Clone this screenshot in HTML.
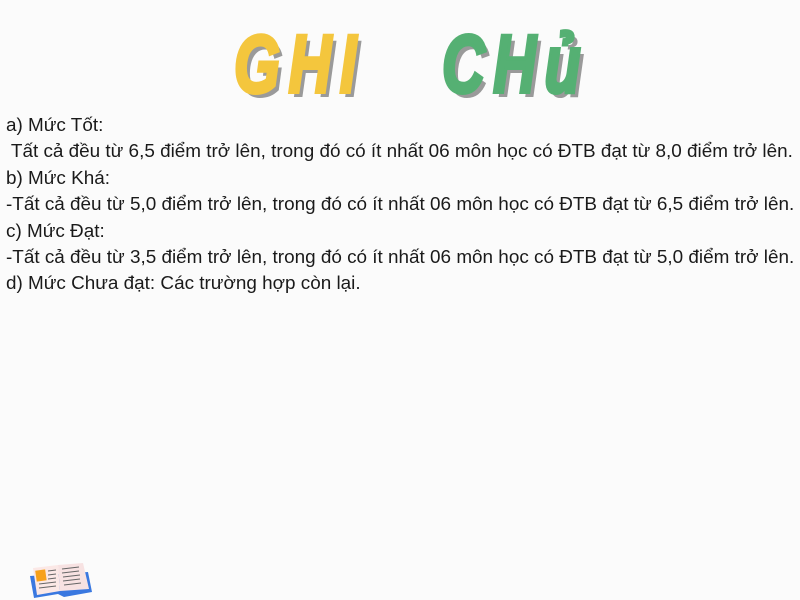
<!DOCTYPE html>
<html><head><meta charset="utf-8"><style>
body{margin:0;width:800px;height:600px;background:#fbfbfb;overflow:hidden;position:relative;font-family:"Liberation Sans","DejaVu Sans",sans-serif}
.t{position:absolute;top:18px;font-family:"Liberation Sans",sans-serif;font-weight:bold;font-style:italic;font-size:82px;letter-spacing:12px;text-shadow:6px 5px 0 #9a9a9a;transform:scaleX(0.72);transform-origin:0 0;white-space:nowrap;-webkit-text-stroke:4px currentColor}
.txt{position:absolute;left:6px;top:113px;font-size:18.9px;line-height:26.4px;color:#1a1a1a;white-space:pre}
</style></head><body>
<div class="t" style="left:234px;color:#f4c63d">GHI</div>
<div class="t" style="left:442px;color:#55b073">CHủ</div>
<div class="txt">a) Mức Tốt:
 Tất cả đều từ 6,5 điểm trở lên, trong đó có ít nhất 06 môn học có ĐTB đạt từ 8,0 điểm trở lên.
b) Mức Khá:
-Tất cả đều từ 5,0 điểm trở lên, trong đó có ít nhất 06 môn học có ĐTB đạt từ 6,5 điểm trở lên.
c) Mức Đạt:
-Tất cả đều từ 3,5 điểm trở lên, trong đó có ít nhất 06 môn học có ĐTB đạt từ 5,0 điểm trở lên.
d) Mức Chưa đạt: Các trường hợp còn lại.</div>
<svg style="position:absolute;left:28px;top:562px" width="66" height="38" viewBox="0 0 66 38">
<path d="M2 14 L6 36 L30 32 L36 35 L64 30 L60 10 Z" fill="#3a78e0"/>
<path d="M5 6 L9 33 L32 29 L30 3 Z" fill="#fbe8e6"/>
<path d="M30 3 L32 29 L61 27 L55 1 Z" fill="#f7e2e2"/>
<rect x="8" y="8" width="10" height="11" fill="#f7a11a" transform="rotate(-8 13 14)"/>
<g stroke="#666" stroke-width="1"><path d="M20 9l8-1M20 13l8-1M20 17l8-1M11 22l17-2M11 26l17-2M34 7l17-2M34 11l17-2M35 15l17-2M35 19l17-2M36 23l17-2"/></g>
</svg>
</body></html>
